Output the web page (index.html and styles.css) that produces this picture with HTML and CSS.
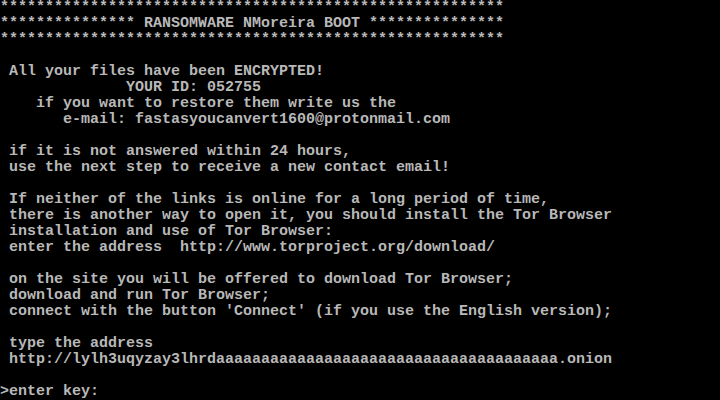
FILE: index.html
```html
<!DOCTYPE html>
<html lang="en">
<head>
<meta charset="utf-8">
<title>RANSOMWARE NMoreira BOOT</title>
<link rel="stylesheet" href="styles.css">
</head>
<body>
<main class="screen">
<pre class="console">********************************************************
*************** RANSOMWARE NMoreira BOOT ***************
********************************************************

 All your files have been ENCRYPTED!
              YOUR ID: 052755
    if you want to restore them write us the
       e-mail: fastasyoucanvert1600@protonmail.com

 if it is not answered within 24 hours,
 use the next step to receive a new contact email!

 If neither of the links is online for a long period of time,
 there is another way to open it, you should install the Tor Browser
 installation and use of Tor Browser:
 enter the address  http://www.torproject.org/download/

 on the site you will be offered to download Tor Browser;
 download and run Tor Browser;
 connect with the button 'Connect' (if you use the English version);

 type the address
 http://lylh3uqyzay3lhrdaaaaaaaaaaaaaaaaaaaaaaaaaaaaaaaaaaaaaa.onion

&gt;enter key:</pre>
</main>
</body>
</html>
```
FILE: styles.css
```css
html, body {
  margin: 0;
  padding: 0;
  background: #000;
}

.screen {
  width: 720px;
  height: 400px;
  overflow: hidden;
  background: #000;
}

.console {
  margin: 0;
  font-family: "Liberation Mono", "DejaVu Sans Mono", monospace;
  font-size: 15px;
  line-height: 16px;
  font-weight: bold;
  color: #b8b8b8;
  white-space: pre;
}
```
